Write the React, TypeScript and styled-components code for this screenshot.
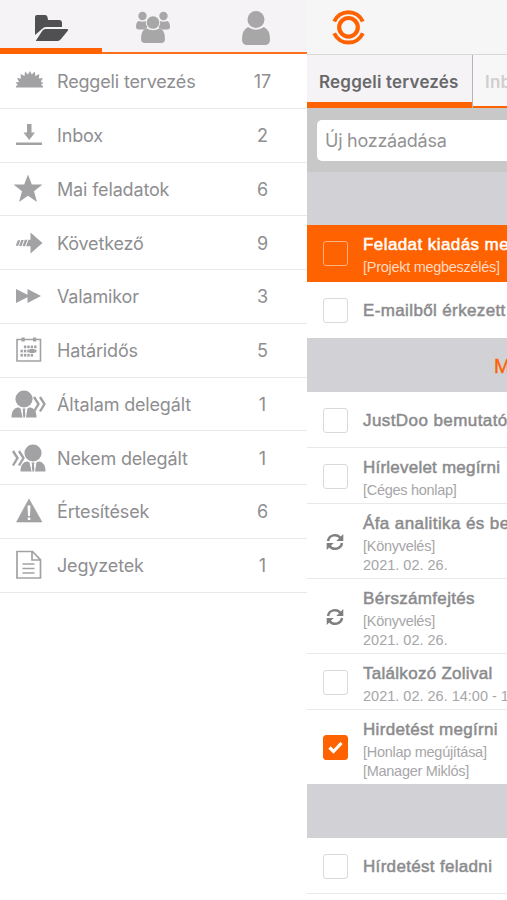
import React from "react";
import styled, { createGlobalStyle } from "styled-components";

const ORANGE = "#ff6200";
const GREY = "#a2a2a5";

const GlobalStyle = createGlobalStyle`
  * { box-sizing: border-box; }
  body { margin: 0; background: #fff; overflow: hidden; font-family: Inter, "Liberation Sans", sans-serif; }
`;

const Screen = styled.div`
  display: flex;
  width: 507px;
  height: 900px;
  overflow: hidden;
  background: #fff;
`;

const Sidebar = styled.nav`
  flex: 0 0 307px;
  display: flex;
  flex-direction: column;
`;

const ModeBar = styled.div`
  display: grid;
  grid-template-columns: 102px 102px 103px;
  grid-template-rows: 54px;
  height: 54px;
  margin-bottom: 1px;
  background: #f5f3f5;
`;

const ModeTab = styled.div<{ $active?: boolean }>`
  display: flex;
  justify-content: center;
  align-items: flex-start;
  height: 54px;
  border-bottom: ${(p) => (p.$active ? `6px solid ${ORANGE}` : "2px solid #ff6f1c")};
  svg { display: block; flex: none; }
`;

const NavRow = styled.div`
  display: grid;
  grid-template-columns: 57px 1fr 89px;
  align-items: center;
  height: 53.75px;
  border-bottom: 1px solid #e9e9ea;
  color: #8e8e91;
  font-size: 18px;
  line-height: 24px;
`;

const NavIcon = styled.span<{ $wide?: boolean }>`
  display: flex;
  justify-content: flex-end;
  padding-right: ${(p) => (p.$wide ? 10 : 14)}px;
  svg { display: block; }
`;

const NavLabel = styled.span`
  white-space: nowrap;
  letter-spacing: -0.16px;
  padding-top: 2px;
`;

const NavCount = styled.span`
  text-align: center;
  padding-top: 2px;
`;

const Main = styled.main`
  flex: 0 0 200px;
  overflow: hidden;
  background: #fff;
`;

const Header = styled.header`
  height: 54px;
  padding: 9px 0 0 25px;
  background: #f6f6f6;
  svg { display: block; }
`;

const Tabs = styled.div`
  display: flex;
  width: 320px;
  height: 54px;
  border-top: 1px solid #d9d9d9;
`;

const Tab = styled.div<{ $active?: boolean }>`
  flex: 0 0 ${(p) => (p.$active ? 165 : 100)}px;
  padding: 15px 0 0 ${(p) => (p.$active ? 12 : 13)}px;
  background: ${(p) => (p.$active ? "#f5f3f5" : "#f8f7f8")};
  border-bottom: ${(p) => (p.$active ? "6px" : "2px")} solid ${ORANGE};
  box-shadow: ${(p) => (p.$active ? "1px 0 0 #b5b4b6" : "none")};
  z-index: ${(p) => (p.$active ? 1 : 0)};
  color: ${(p) => (p.$active ? "#68686a" : "#cfced0")};
  font-size: 17px;
  font-weight: 600;
  line-height: 24px;
  letter-spacing: 0.2px;
  white-space: nowrap;
`;

const AddBar = styled.div`
  height: 64px;
  padding: 12px 0 0 10px;
  background: #c8c8c8;
`;

const AddField = styled.div`
  width: 300px;
  height: 41px;
  padding: 9px 8px;
  border-radius: 5px;
  background: #fff;
  color: #939395;
  font-size: 18px;
  line-height: 24px;
  letter-spacing: -0.25px;
`;

const Section = styled.div<{ $height: number }>`
  height: ${(p) => p.$height}px;
  padding-left: 187px;
  background: #d1d1d6;
  color: ${ORANGE};
  font: 20px/57px "Liberation Sans", sans-serif;
  -webkit-text-stroke: 0.4px currentColor;
`;

const TaskRow = styled.div<{ $height: number; $urgent?: boolean; $last?: boolean }>`
  display: grid;
  grid-template-columns: 56px 300px;
  align-items: center;
  height: ${(p) => p.$height}px;
  border-bottom: ${(p) => (p.$last ? "0" : "1px")} solid ${(p) => (p.$urgent ? ORANGE : "#e9e9ea")};
  background: ${(p) => (p.$urgent ? ORANGE : "#fff")};
  color: ${(p) => (p.$urgent ? "#fff" : "#8b8b8d")};
`;

const Marker = styled.div`
  display: flex;
  justify-content: center;
  padding-top: 1px;
  svg { display: block; }
`;

const Checkbox = styled.div<{ $checked?: boolean; $urgent?: boolean }>`
  display: grid;
  place-items: center;
  width: 25px;
  height: 25px;
  border: 1px solid ${(p) => (p.$checked ? ORANGE : p.$urgent ? "#ffb080" : "#d9d9da")};
  border-radius: 3px;
  background: ${(p) => (p.$checked || p.$urgent ? ORANGE : "#fff")};
`;

const TaskText = styled.div<{ $single: boolean }>`
  align-self: start;
  padding-top: ${(p) => (p.$single ? 18 : 9)}px;
  font-family: "Liberation Sans", sans-serif;
  white-space: nowrap;
`;

const TaskTitle = styled.div<{ $spacing: number }>`
  margin-bottom: 2px;
  font-size: 17px;
  line-height: 22px;
  letter-spacing: ${(p) => p.$spacing}px;
  -webkit-text-stroke: 0.5px currentColor;
`;

const TaskNote = styled.div<{ $urgent?: boolean; $spacing: number }>`
  font-size: 14.5px;
  line-height: 18.5px;
  letter-spacing: ${(p) => p.$spacing}px;
  color: ${(p) => (p.$urgent ? "#ffd9c0" : "#a6a6a8")};
`;

const FolderIcon = () => (
  <svg width="36" height="48" viewBox="0 0 36 48" fill="#505052">
    <path d="M2 35V17q0-2 2-2h8q2 0 2.500 2l.5 3h11q3 0 3 3v4H13q-2.500 0-4 2z" />
    <path d="M3 40.500 9.500 30.500q1-1.500 3-1.500H34q2 0 .8 1.700L28 39q-1.400 2-3.500 2H4q-1.500 0-1-.5z" />
  </svg>
);

const GroupIcon = () => (
  <svg width="36" height="48" viewBox="0 0 36 48" fill="#a7a7a8">
    <circle cx="7.500" cy="16" r="4.200" />
    <circle cx="28.500" cy="16" r="4.200" />
    <path d="M3.800 21q3.500 1.500 7 0 1 4.500 2 6-3 1.500-4 2.500H4q-3 0-3-2.500 0-5 2.800-6z" />
    <path d="M32.200 21q-3.500 1.500-7 0-1 4.500-2 6 3 1.500 4 2.500h4.800q3 0 3-2.500 0-5-2.800-6z" />
    <circle cx="18" cy="22.500" r="7.200" fill="#f5f3f5" />
    <circle cx="18" cy="22.500" r="6.300" />
    <path d="M11 28q7 4.500 14 0 5 2.500 5 11 0 4-4 4H10q-4 0-4-4 0-8.500 5-11z" />
  </svg>
);

const PersonIcon = () => (
  <svg width="30" height="48" viewBox="0 0 30 48" fill="#a7a7a8">
    <circle cx="15" cy="19.500" r="8.500" />
    <path d="M7 27q8 5.500 16 0 6 3 6 12 0 6-5 6H6q-5 0-5-6 0-9 6-12z" />
  </svg>
);

const Logo = () => (
  <svg width="34" height="37" viewBox="0 0 34 37" fill="none" stroke={ORANGE}>
    <circle cx="16.500" cy="18.300" r="9.300" strokeWidth="4.200" />
    <path d="M2.200 12.500A15.600 15.600 0 0 1 30.800 12.500M2.200 24.200A15.600 15.600 0 0 0 30.800 24.200" strokeWidth="4" />
  </svg>
);

const SunriseIcon = () => (
  <svg width="28" height="28" viewBox="0 0 28 28" fill={GREY}>
    <path d="M1 20.500V19l2-1-2.500-2.500L4 15 2 11l4 .5L5.500 7l4 2 .5-4.500 3 3L15 4l1.800 3.500 3-3 .5 4.500 4-2-.5 4.500 4-.5-2 4 2.700.5L26 18l2 1v1.500z" />
  </svg>
);

const InboxIcon = () => (
  <svg width="28" height="28" viewBox="0 0 28 28" fill={GREY}>
    <path d="M12 3h4.500v8.500H20L14.200 19 8.500 11.500H12zM1 21.500h26V24H1z" />
  </svg>
);

const StarIcon = () => (
  <svg width="30" height="30" viewBox="0 0 30 30" fill={GREY}>
    <path d="m15 .5 3.800 10h10.700L21 17.200 24 28l-9-6.200L6 28l3-10.800L.5 10.500h10.700z" />
  </svg>
);

const ArrowIcon = () => (
  <svg width="28" height="28" viewBox="0 0 28 28" fill={GREY}>
    <path d="M15.500 3.500 27.500 14 15.500 24.500V17.200H11l2.500-6.400h2zM2.800 11.200h2.500L3.200 16.800H.7zM6.300 11h2.500l-2.300 6H4zM9.800 10.800h2.700L10 17.200H7.500z" />
  </svg>
);

const ForwardIcon = () => (
  <svg width="28" height="28" viewBox="0 0 28 28" fill={GREY}>
    <path d="M1 7 12.500 12.800V7L26 14 12.500 21v-5.800L1 21z" />
  </svg>
);

const calendarDays = [
  [1, 2, 3, 4],
  [0, 1, 2, 3, 4],
  [0, 1, 2, 3],
];

const CalendarIcon = () => (
  <svg width="28" height="28" viewBox="0 0 28 28" fill={GREY}>
    <path d="M2 3.500h23.500v21.500H2z" fill="none" stroke={GREY} strokeWidth="1.600" />
    <path d="M6.500 1.500h3.200v4H6.500zM18 1.500h3.200v4H18z" />
    {calendarDays.map((days, row) =>
      days.map((day) => (
        <rect key={`${row}-${day}`} x={5.5 + day * 3.4} y={9.5 + row * 4.2} width="2.400" height="2.700" />
      ))
    )}
    <rect x="14.500" y="13" width="5" height="4" />
  </svg>
);

const Bust = ({ x }: { x: number }) => (
  <g transform={`translate(${x} 0)`}>
    <ellipse cx="13" cy="9" rx="8.600" ry="8.500" />
    <path d="M7 17.500q1.500 0 3 1.200L12 27.500H.5q0-6 2.500-8 1.500-2 4-2zM19 17.500q-1.500 0-3 1.200L14 27.500h11.500q0-6-2.500-8-1.500-2-4-2zM11.500 18.500h3l-.5 2 .6 7h-3.200l.6-7z" />
    <path d="M10 18 12 27.500M16 18 14.500 27.500" stroke="#fff" strokeWidth="1" />
  </g>
);

const DelegatedByIcon = () => (
  <svg width="36" height="28" viewBox="0 0 36 28" fill={GREY}>
    <Bust x={0} />
    <path d="m23 7 4.500 7-4.500 7.500M29 7l4.500 7-4.500 7.500" fill="none" stroke={GREY} strokeWidth="2.400" />
  </svg>
);

const DelegatedToIcon = () => (
  <svg width="36" height="28" viewBox="0 0 36 28" fill={GREY}>
    <Bust x={9} />
    <path d="m2 7 4.500 7L2 21.500M8 7l4.500 7L8 21.500" fill="none" stroke={GREY} strokeWidth="2.400" />
  </svg>
);

const WarningIcon = () => (
  <svg width="28" height="28" viewBox="0 0 28 28" fill={GREY}>
    <path d="M14 2 27 25H1.500z" stroke={GREY} strokeWidth=".6" strokeLinejoin="round" />
    <path d="M12.500 8.500h3L15 19h-2zM12.800 20.500h2.500V23h-2.500z" fill="#fff" />
  </svg>
);

const NoteIcon = () => (
  <svg width="28" height="30" viewBox="0 0 28 30" fill="none" stroke={GREY} strokeWidth="1.700">
    <path d="M2 1.500h15.500l8 8.300V28H2zM17 1.500V10h8.500M7.500 14h12M7.500 18.500h12M7.500 23h12" />
  </svg>
);

const RepeatIcon = () => (
  <svg width="18" height="18" viewBox="0 0 18 18" fill="none" stroke="#7f7f81" strokeWidth="2.500">
    <path d="M2 8A7 7 0 0 1 14.500 5M16 10A7 7 0 0 1 3.500 13" />
    <path d="M17.300 1v7h-7zM.7 17v-7h7z" fill="#7f7f81" stroke="none" />
  </svg>
);

const CheckIcon = () => (
  <svg width="17" height="15" viewBox="0 0 17 15" fill="none" stroke="#fff" strokeWidth="3.200">
    <path d="m2.500 7.500 4 4 8-8.500" />
  </svg>
);

const navItems = [
  { label: "Reggeli tervezés", count: 17, icon: <SunriseIcon /> },
  { label: "Inbox", count: 2, icon: <InboxIcon /> },
  { label: "Mai feladatok", count: 6, icon: <StarIcon /> },
  { label: "Következő", count: 9, icon: <ArrowIcon /> },
  { label: "Valamikor", count: 3, icon: <ForwardIcon /> },
  { label: "Határidős", count: 5, icon: <CalendarIcon /> },
  { label: "Általam delegált", count: 1, icon: <DelegatedByIcon />, wide: true },
  { label: "Nekem delegált", count: 1, icon: <DelegatedToIcon />, wide: true },
  { label: "Értesítések", count: 6, icon: <WarningIcon /> },
  { label: "Jegyzetek", count: 1, icon: <NoteIcon /> },
];

type TaskProps = {
  title: string;
  notes?: string[];
  height: number;
  spacing?: number;
  kind?: "open" | "done" | "repeat";
  urgent?: boolean;
  last?: boolean;
};

const Task = ({ title, notes = [], height, spacing = 0.32, kind = "open", urgent, last }: TaskProps) => (
  <TaskRow $height={height} $urgent={urgent} $last={last}>
    <Marker>
      {kind === "repeat" ? (
        <RepeatIcon />
      ) : (
        <Checkbox $checked={kind === "done"} $urgent={urgent}>
          {kind === "done" && <CheckIcon />}
        </Checkbox>
      )}
    </Marker>
    <TaskText $single={notes.length === 0}>
      <TaskTitle $spacing={spacing}>{title}</TaskTitle>
      {notes.map((note) => (
        <TaskNote key={note} $urgent={urgent} $spacing={note.startsWith("[") ? -0.28 : 0}>
          {note}
        </TaskNote>
      ))}
    </TaskText>
  </TaskRow>
);

export default function App() {
  return (
    <Screen>
      <GlobalStyle />
      <Sidebar>
        <ModeBar>
          <ModeTab $active><FolderIcon /></ModeTab>
          <ModeTab><GroupIcon /></ModeTab>
          <ModeTab><PersonIcon /></ModeTab>
        </ModeBar>
        {navItems.map((item) => (
          <NavRow key={item.label}>
            <NavIcon $wide={item.wide}>{item.icon}</NavIcon>
            <NavLabel>{item.label}</NavLabel>
            <NavCount>{item.count}</NavCount>
          </NavRow>
        ))}
      </Sidebar>
      <Main>
        <Header><Logo /></Header>
        <Tabs>
          <Tab $active>Reggeli tervezés</Tab>
          <Tab>Inbox</Tab>
        </Tabs>
        <AddBar><AddField>Új hozzáadása</AddField></AddBar>
        <Section $height={53} />
        <Task title="Feladat kiadás megbeszélés" notes={["[Projekt megbeszélés]"]} height={57} spacing={0.42} urgent />
        <Task title="E-mailből érkezett" height={56} spacing={0.37} last />
        <Section $height={54}>Ma</Section>
        <Task title="JustDoo bemutató" height={56} spacing={0.42} />
        <Task title="Hírlevelet megírni" notes={["[Céges honlap]"]} height={56} spacing={0.22} />
        <Task title="Áfa analitika és bevallás" notes={["[Könyvelés]", "2021. 02. 26."]} height={75} spacing={0.4} kind="repeat" />
        <Task title="Bérszámfejtés" notes={["[Könyvelés]", "2021. 02. 26."]} height={75} kind="repeat" />
        <Task title="Találkozó Zolival" notes={["2021. 02. 26. 14:00 - 15:00"]} height={56} spacing={0.28} />
        <Task title="Hirdetést megírni" notes={["[Honlap megújítása]", "[Manager Miklós]"]} height={74} kind="done" last />
        <Section $height={54} />
        <Task title="Hírdetést feladni" height={56} />
      </Main>
    </Screen>
  );
}
